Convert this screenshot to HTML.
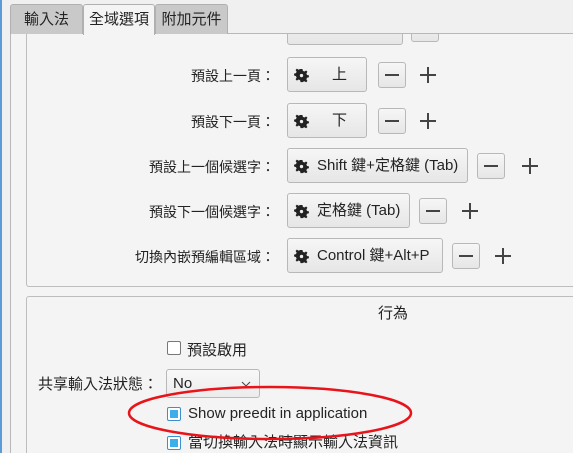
<!DOCTYPE html><html><head><meta charset="utf-8"><style>
*{margin:0;padding:0;box-sizing:border-box}
html,body{width:573px;height:453px;overflow:hidden}
body{background:#f0f0f0;font-family:"Liberation Sans","Noto Sans CJK TC",sans-serif;font-size:14px;color:#232323;position:relative}
.a{position:absolute}
.tab{position:absolute;top:4px;height:30px;background:#c9c9c9;border:1px solid #b0b0b0;border-bottom:none;border-radius:3px 3px 0 0;text-align:center;line-height:30px;font-size:15px}
.btn{position:absolute;height:35px;background:linear-gradient(#f6f6f6,#e6e6e6);border:1px solid #b8b8b8;border-radius:3px;line-height:33px;white-space:nowrap}
.btn svg{position:absolute;left:6px;top:10px}
.btn span{position:absolute;left:29px}
.m{position:absolute;width:28px;height:26px;background:linear-gradient(#f6f6f6,#e6e6e6);border:1px solid #b8b8b8;border-radius:3px}
.m:after{content:"";position:absolute;left:6px;right:6px;top:11px;height:1.5px;background:#444}
.p{position:absolute;width:16px;height:16px}
.p:before{content:"";position:absolute;left:0;right:0;top:7px;height:1.5px;background:#444}
.p:after{content:"";position:absolute;top:0;bottom:0;left:7px;width:1.5px;background:#444}
.l{position:absolute;right:298px;white-space:nowrap;font-size:14px}
.cb{position:absolute;width:14px;height:14px;border:1px solid #777;border-radius:2px;background:#fff}
.cb.on{border-color:#3a8fd0}
.cb.on:after{content:"";position:absolute;left:2px;top:2px;width:8px;height:8px;background:#3daee9}
.t{font-size:15px}
#clip{position:absolute;left:11px;top:34px;width:562px;height:419px;overflow:hidden;background:#f4f4f4}
</style></head><body>
<div class="a" style="left:0;top:0;width:2px;height:453px;background:#5b9bd8"></div>
<div class="a" style="left:10px;top:33px;width:1px;height:420px;background:#b8b8b8"></div>
<div class="a" style="left:10px;top:33px;width:563px;height:1px;background:#b8b8b8"></div>
<div class="tab" style="left:10px;width:73px">輸入法</div>
<div class="tab" style="left:83px;width:72px;background:#f4f4f4;height:31px;z-index:2">全域選項</div>
<div class="tab" style="left:155px;width:73px">附加元件</div>

<svg width="0" height="0" style="position:absolute"><defs><g id="g"><path fill="#222" fill-rule="evenodd" d="M6 0h2l.5 2 1.6.7 1.8-1.1 1.4 1.4-1.1 1.8.7 1.6 2 .5v2l-2 .5-.7 1.6 1.1 1.8-1.4 1.4-1.8-1.1-1.6.7L8 14H6l-.5-2-1.6-.7-1.8 1.1L.7 11l1.1-1.8L1.1 7.6-.9 7V5l2-.5.7-1.6L.7 1.1 2.1-.3 3.9.8 5.5.1z M7 5.2a1.8 1.8 0 1 0 0 3.6a1.8 1.8 0 1 0 0-3.6z"/></g></defs></svg>

<div id="clip"><div style="position:absolute;left:-11px;top:-34px;width:573px;height:453px">
<div class="a" style="left:26px;top:20px;width:547px;height:267px;border:1px solid #bdbdbd;border-right:none;border-radius:3px 0 0 3px"></div>
<div class="a" style="left:26px;top:296px;width:547px;height:157px;border:1px solid #bdbdbd;border-right:none;border-bottom:none;border-radius:3px 0 0 0"></div>
<div class="btn" style="left:287px;top:10px;width:116px"></div>
<div class="m" style="left:411px;top:16px"></div>
<div class="p" style="left:456px;top:18px"></div>

<div class="l" style="top:66px">預設上一頁：</div>
<div class="btn" style="left:287px;top:57px;width:80px"><svg width="15" height="15" viewBox="-1 -1 16 16"><use href="#g"/></svg><span class="t" style="left:44px">上</span></div>
<div class="m" style="left:378px;top:62px"></div><div class="p" style="left:420px;top:67px"></div>

<div class="l" style="top:112px">預設下一頁：</div>
<div class="btn" style="left:287px;top:103px;width:80px"><svg width="15" height="15" viewBox="-1 -1 16 16"><use href="#g"/></svg><span class="t" style="left:44px">下</span></div>
<div class="m" style="left:378px;top:108px"></div><div class="p" style="left:420px;top:113px"></div>

<div class="l" style="top:157px">預設上一個候選字：</div>
<div class="btn" style="left:287px;top:148px;width:181px"><svg width="15" height="15" viewBox="-1 -1 16 16"><use href="#g"/></svg><span class="t">Shift 鍵+定格鍵 (Tab)</span></div>
<div class="m" style="left:477px;top:153px"></div><div class="p" style="left:522px;top:158px"></div>

<div class="l" style="top:202px">預設下一個候選字：</div>
<div class="btn" style="left:287px;top:193px;width:123px"><svg width="15" height="15" viewBox="-1 -1 16 16"><use href="#g"/></svg><span class="t">定格鍵 (Tab)</span></div>
<div class="m" style="left:419px;top:198px"></div><div class="p" style="left:462px;top:203px"></div>

<div class="l" style="top:247px">切換內嵌預編輯區域：</div>
<div class="btn" style="left:287px;top:238px;width:156px"><svg width="15" height="15" viewBox="-1 -1 16 16"><use href="#g"/></svg><span class="t">Control 鍵+Alt+P</span></div>
<div class="m" style="left:452px;top:243px"></div><div class="p" style="left:495px;top:248px"></div>

<div class="a t" style="left:378px;top:302px">行為</div>
<div class="cb" style="left:167px;top:341px"></div><div class="a t" style="left:187px;top:339px">預設啟用</div>
<div class="a t" style="left:38px;top:373px">共享輸入法狀態：</div>
<div class="a" style="left:166px;top:369px;width:94px;height:29px;border:1px solid #b8b8b8;border-radius:3px;background:linear-gradient(#f8f8f8,#ececec)"><span class="t" style="position:absolute;left:6px;top:5px">No</span><svg style="position:absolute;left:74px;top:11px" width="10" height="6"><path d="M1 1l4 4 4-4" stroke="#444" fill="none"/></svg></div>
<div class="cb on" style="left:167px;top:407px"></div><div class="a t" style="left:188px;top:405px">Show preedit in application</div>
<div class="cb on" style="left:167px;top:436px"></div><div class="a t" style="left:188px;top:434px;white-space:nowrap;line-height:17px">當切換輸入法時顯示輸入法資訊</div>
</div></div>
<svg class="a" style="left:0;top:0" width="573" height="453"><ellipse cx="270" cy="413" rx="141" ry="26" fill="none" stroke="#e8141a" stroke-width="2.5"/></svg>
</body></html>
